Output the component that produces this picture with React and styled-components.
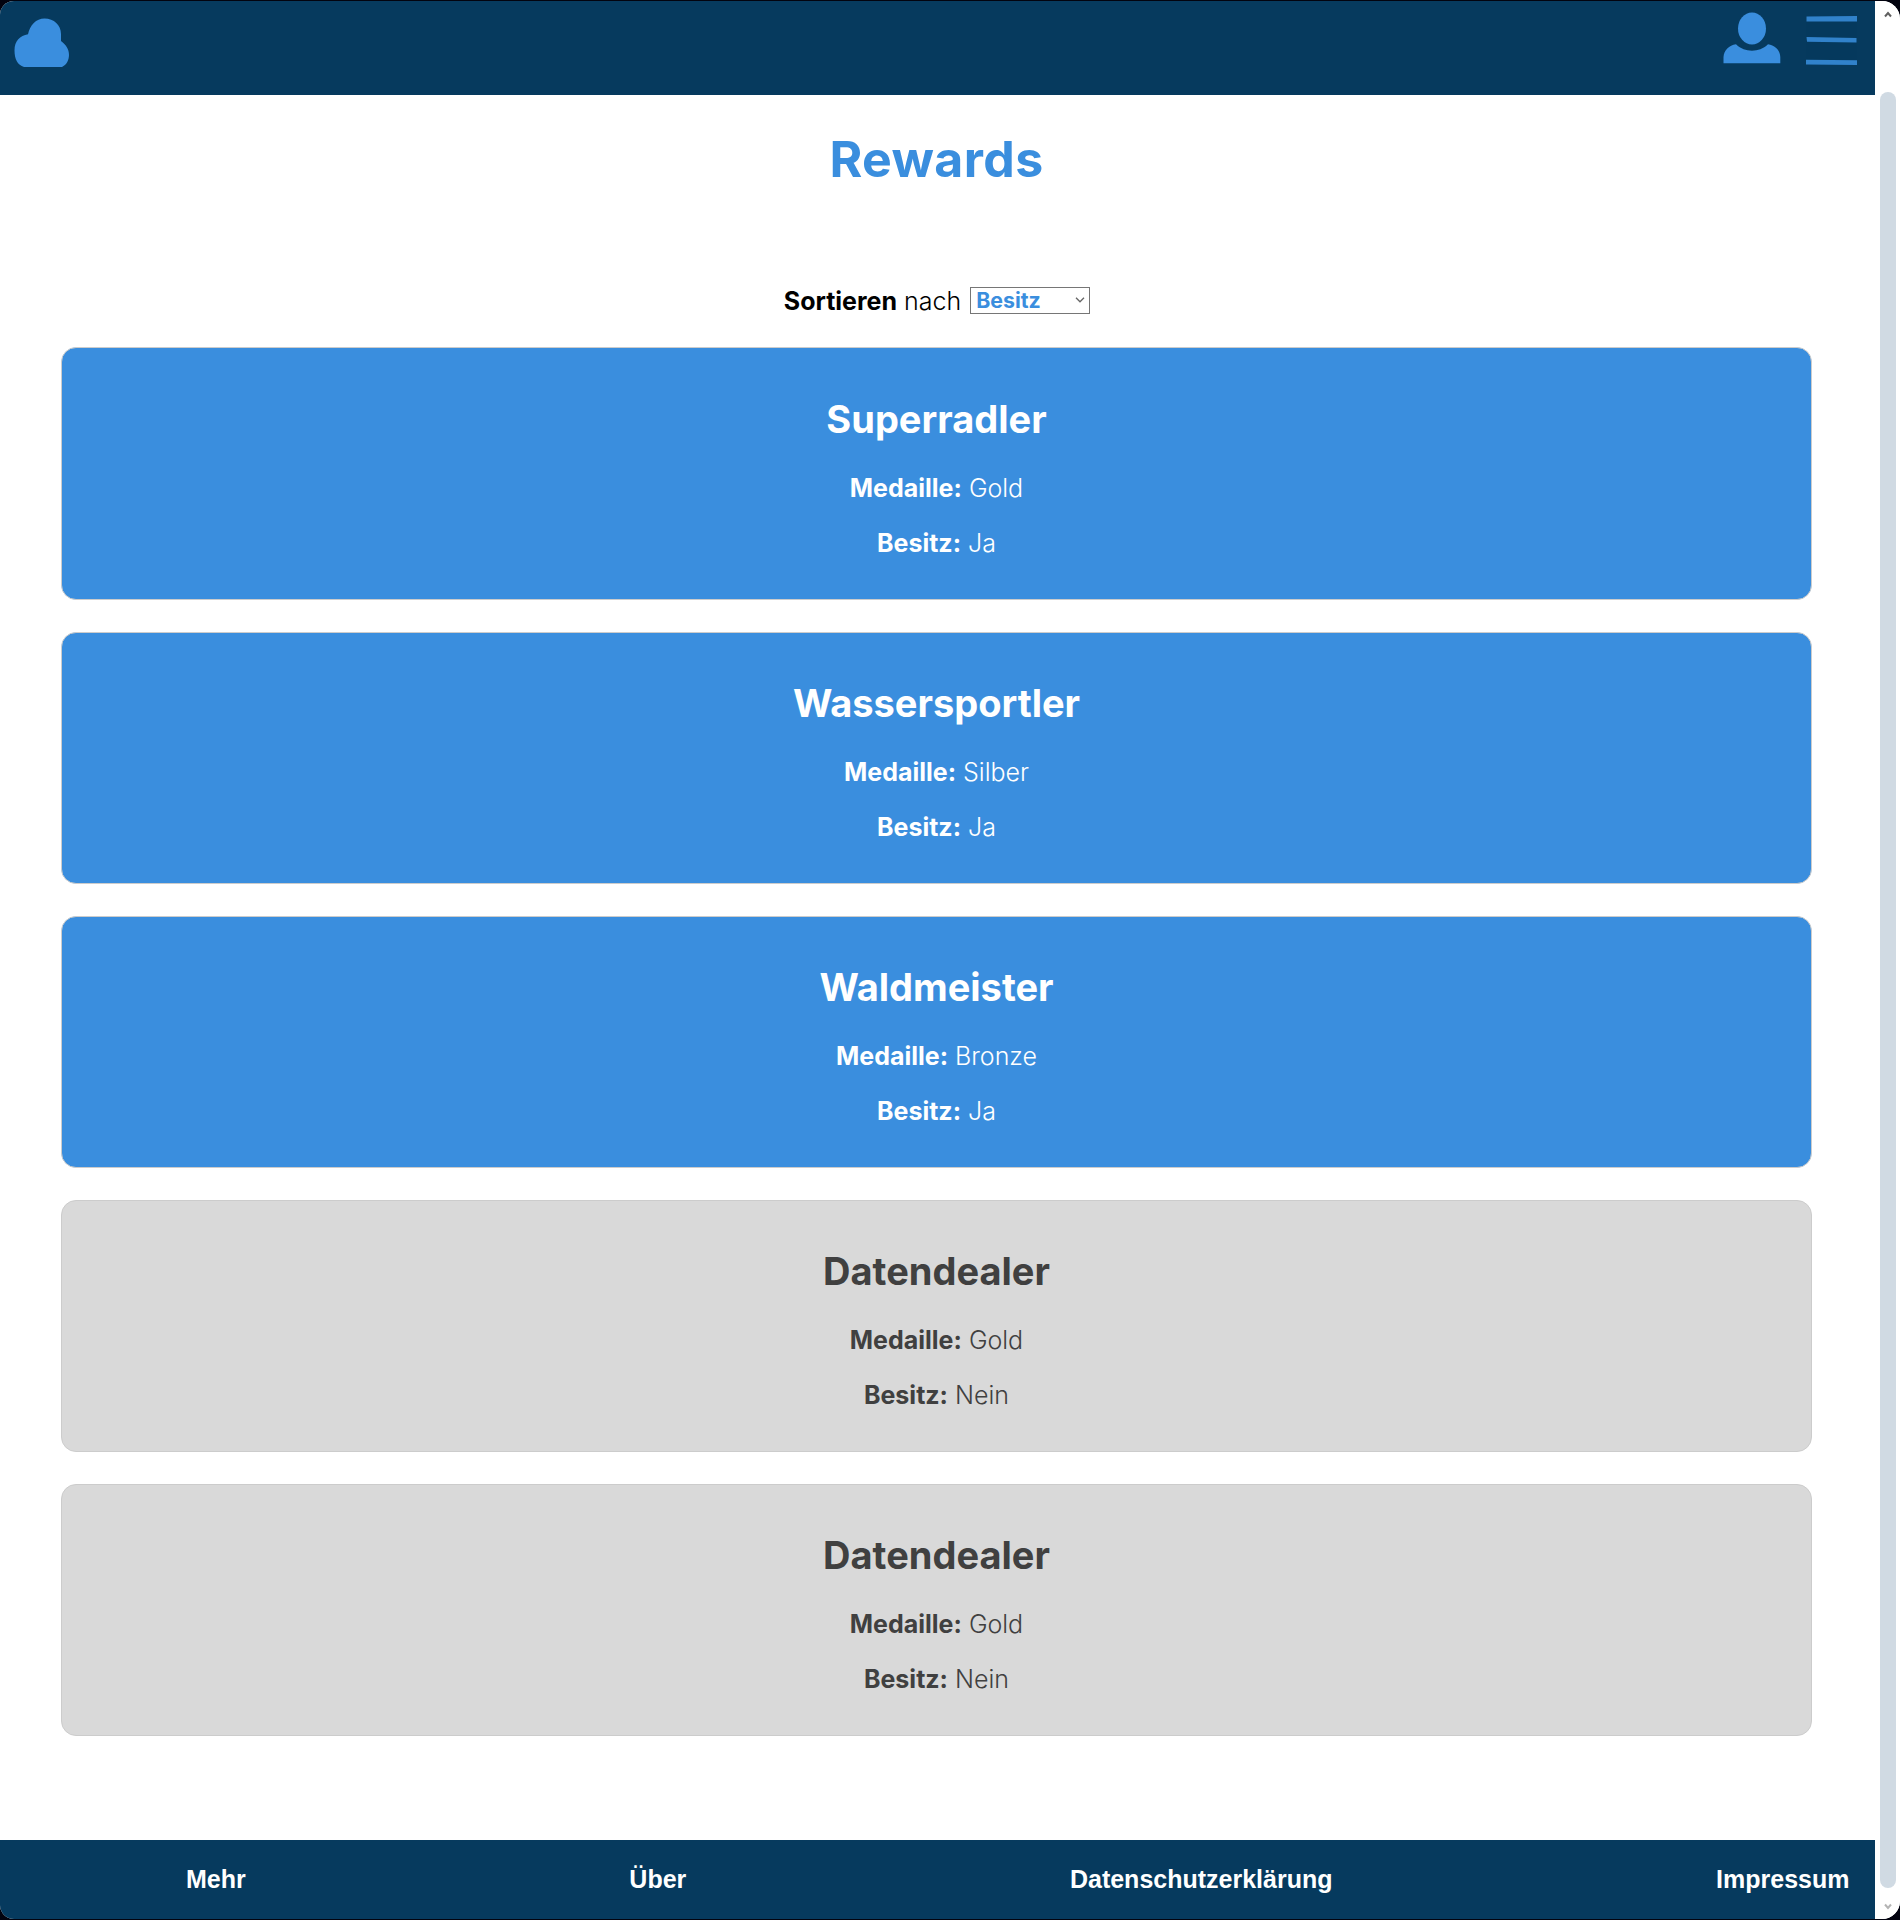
import React from "react";
import styled, { createGlobalStyle } from "styled-components";

const GlobalStyle = createGlobalStyle`
  * { box-sizing: border-box; }
  body { margin: 0; background: #02030f; }
`;

const Window = styled.div`
  display: flex;
  height: 1920px;
  padding: 1px 0;
  font-family: Inter, "Liberation Sans", sans-serif;
`;

const Frame = styled.div`
  display: flex;
  flex: 1;
  overflow: hidden;
  border-radius: 14px 18px 18px 14px;
  background: #fff;
`;

const Page = styled.div`
  display: flex;
  flex-direction: column;
  flex: 1;
`;

const Header = styled.header`
  display: flex;
  align-items: flex-start;
  justify-content: space-between;
  height: 94px;
  flex: none;
  padding: 9px 17px 0 13px;
  background: #063a5e;
`;

const HeaderActions = styled.div`
  display: flex;
  gap: 24px;
`;

const IconButton = styled.button`
  display: flex;
  border: 0;
  padding: 0;
  background: none;
  color: #3a8ede;
`;

const Main = styled.main`
  display: flex;
  flex-direction: column;
  flex: 1;
  padding: 32px 63px 0 61px;
`;

const Title = styled.h1`
  margin: 0;
  font-size: 50px;
  line-height: 64px;
  font-weight: 700;
  letter-spacing: 0.4px;
  color: #3a8ede;
  text-align: center;
`;

const SortBar = styled.div`
  display: flex;
  align-items: center;
  justify-content: center;
  gap: 9px;
  height: 32px;
  margin: 94px 0 30.4px;
  padding-left: 1px;
  font-size: 25px;
  font-weight: 300;
  color: #000;
`;

const SelectBox = styled.label`
  display: grid;
  grid-template-columns: 1fr 18px;
  align-items: center;
  width: 120px;
  height: 27px;
  margin-bottom: 2px;
  border: 1px solid #767676;
`;

const Select = styled.select`
  grid-area: 1 / 1 / 2 / 3;
  appearance: none;
  width: 100%;
  height: 25px;
  border: 0;
  padding: 0 5px;
  background: transparent;
  color: #3a8ede;
  font: 700 21.3px/25px Inter, "Liberation Sans", sans-serif;
`;

const Chevron = styled.svg`
  grid-area: 1 / 2;
  justify-self: center;
  pointer-events: none;
`;

const CardList = styled.div`
  display: flex;
  flex-direction: column;
  gap: 32px;
`;

const Card = styled.article`
  height: 252.2px;
  padding: 44.2px 0 0;
  border: 1px solid #ccc;
  border-radius: 15px;
  text-align: center;
  background: ${(p) => (p.$owned ? "#3a8ede" : "#d9d9d9")};
  color: ${(p) => (p.$owned ? "#fff" : "#404040")};
`;

const CardTitle = styled.h2`
  margin: 0 0 27px;
  font-size: 38px;
  line-height: 52px;
  font-weight: 700;
`;

const CardLine = styled.p`
  margin: 0 0 23px;
  font-size: 25px;
  line-height: 32px;
  font-weight: 300;
`;

const Strong = styled.strong`
  font-weight: 700;
`;

const Footer = styled.footer`
  display: flex;
  justify-content: space-between;
  height: 79px;
  flex: none;
  padding: 0 25.5px 0 186px;
  background: #063a5e;
`;

const FooterLink = styled.a`
  font: 700 25px/79px "Liberation Sans", sans-serif;
  color: #fff;
`;

const Scrollbar = styled.div`
  display: flex;
  flex-direction: column;
  align-items: center;
  justify-content: space-between;
  width: 25px;
  padding: 10px 4px 9px 5px;
  background: #fff;
`;

const Thumb = styled.div`
  flex: 1;
  width: 16px;
  margin: 74px 0 15px;
  border-radius: 8px;
  background: #d0dae3;
`;

const rewards = [
  { name: "Superradler", medal: "Gold", owned: true },
  { name: "Wassersportler", medal: "Silber", owned: true },
  { name: "Waldmeister", medal: "Bronze", owned: true },
  { name: "Datendealer", medal: "Gold", owned: false },
  { name: "Datendealer", medal: "Gold", owned: false },
];

const links = ["Mehr", "Über", "Datenschutzerklärung", "Impressum"];

function CloudIcon() {
  return (
    <svg width="58" height="60" viewBox="13 10 58 60">
      <path
        d="M24 67C17.500 65 14.500 59 14.500 50.500C14.500 41 20 35.500 28 34.300C30 25 36 18.500 44.500 18.500C54 18.500 61 25 61 34V41C66 45 69 49 69 55C69 60 66.500 65 62 67Z"
        fill="currentColor"
      />
    </svg>
  );
}

function UserIcon() {
  return (
    <svg width="60" height="56" viewBox="1722 10 60 56">
      <ellipse cx="1752" cy="28.500" rx="14" ry="16" fill="currentColor" />
      <path
        d="M1723.500 63.300V57C1724 50 1729 45.500 1736 44.300C1741 49 1746 50.700 1752 50.700C1758 50.700 1763 49 1768 44.300C1775 45.500 1780 50 1780.300 57V63.300Z"
        fill="currentColor"
      />
    </svg>
  );
}

function MenuIcon() {
  return (
    <svg width="52" height="56" viewBox="1806 10 52 56" opacity="0.86">
      <path d="M1806.500 16.500L1857 16V21.500H1806.500Z" fill="currentColor" />
      <path d="M1806.500 37L1856.500 38V42.500L1807 41.700Z" fill="currentColor" />
      <path d="M1806 59.800L1857 60.200V65L1806 64.500Z" fill="currentColor" />
    </svg>
  );
}

export default function App() {
  return (
    <Window>
      <GlobalStyle />
      <Frame>
        <Page>
          <Header>
            <IconButton aria-label="Home">
              <CloudIcon />
            </IconButton>
            <HeaderActions>
              <IconButton aria-label="Profil">
                <UserIcon />
              </IconButton>
              <IconButton aria-label="Menü">
                <MenuIcon />
              </IconButton>
            </HeaderActions>
          </Header>
          <Main>
            <Title>Rewards</Title>
            <SortBar>
              <span>
                <Strong>Sortieren</Strong> nach
              </span>
              <SelectBox>
                <Select defaultValue="Besitz">
                  <option>Besitz</option>
                  <option>Medaille</option>
                </Select>
                <Chevron width="10" height="6" viewBox="0 0 10 6">
                  <path d="M1 0.800L5 4.800L9 0.800" fill="none" stroke="#666" strokeWidth="1.300" />
                </Chevron>
              </SelectBox>
            </SortBar>
            <CardList>
              {rewards.map((r, i) => (
                <Card key={i} $owned={r.owned}>
                  <CardTitle>{r.name}</CardTitle>
                  <CardLine>
                    <Strong>Medaille:</Strong> {r.medal}
                  </CardLine>
                  <CardLine>
                    <Strong>Besitz:</Strong> {r.owned ? "Ja" : "Nein"}
                  </CardLine>
                </Card>
              ))}
            </CardList>
          </Main>
          <Footer>
            {links.map((label) => (
              <FooterLink key={label}>{label}</FooterLink>
            ))}
          </Footer>
        </Page>
        <Scrollbar>
          <svg width="8" height="7" viewBox="0 0 8 7">
            <path d="M1 5.500L4 2L7 5.500" fill="none" stroke="#606060" strokeWidth="2" />
          </svg>
          <Thumb />
          <svg width="8" height="7" viewBox="0 0 8 7">
            <path d="M1 1.500L4 5L7 1.500" fill="none" stroke="#b4b4b4" strokeWidth="2" />
          </svg>
        </Scrollbar>
      </Frame>
    </Window>
  );
}
